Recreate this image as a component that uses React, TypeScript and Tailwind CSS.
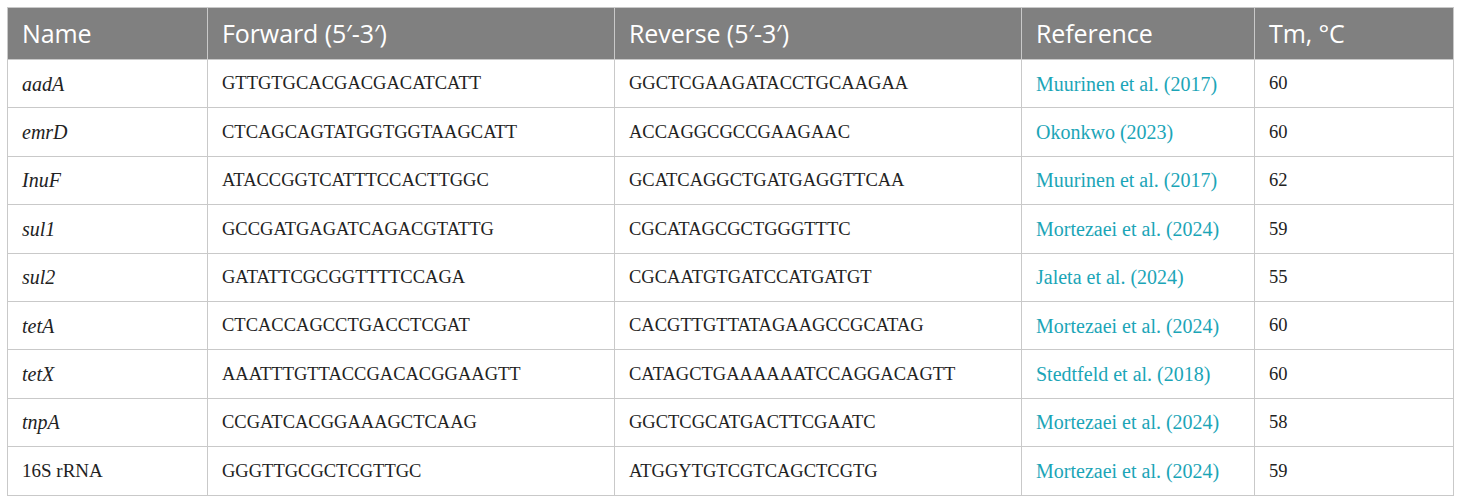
import React from 'react';

type Row = {
  name: string;
  italic: boolean;
  fwd: string;
  rev: string;
  ref: string;
  tm: number;
};

const ROWS: Row[] = [
  { name: 'aadA', italic: true, fwd: 'GTTGTGCACGACGACATCATT', rev: 'GGCTCGAAGATACCTGCAAGAA', ref: 'Muurinen et al. (2017)', tm: 60 },
  { name: 'emrD', italic: true, fwd: 'CTCAGCAGTATGGTGGTAAGCATT', rev: 'ACCAGGCGCCGAAGAAC', ref: 'Okonkwo (2023)', tm: 60 },
  { name: 'InuF', italic: true, fwd: 'ATACCGGTCATTTCCACTTGGC', rev: 'GCATCAGGCTGATGAGGTTCAA', ref: 'Muurinen et al. (2017)', tm: 62 },
  { name: 'sul1', italic: true, fwd: 'GCCGATGAGATCAGACGTATTG', rev: 'CGCATAGCGCTGGGTTTC', ref: 'Mortezaei et al. (2024)', tm: 59 },
  { name: 'sul2', italic: true, fwd: 'GATATTCGCGGTTTTCCAGA', rev: 'CGCAATGTGATCCATGATGT', ref: 'Jaleta et al. (2024)', tm: 55 },
  { name: 'tetA', italic: true, fwd: 'CTCACCAGCCTGACCTCGAT', rev: 'CACGTTGTTATAGAAGCCGCATAG', ref: 'Mortezaei et al. (2024)', tm: 60 },
  { name: 'tetX', italic: true, fwd: 'AAATTTGTTACCGACACGGAAGTT', rev: 'CATAGCTGAAAAAATCCAGGACAGTT', ref: 'Stedtfeld et al. (2018)', tm: 60 },
  { name: 'tnpA', italic: true, fwd: 'CCGATCACGGAAAGCTCAAG', rev: 'GGCTCGCATGACTTCGAATC', ref: 'Mortezaei et al. (2024)', tm: 58 },
  { name: '16S rRNA', italic: false, fwd: 'GGGTTGCGCTCGTTGC', rev: 'ATGGYTGTCGTCAGCTCGTG', ref: 'Mortezaei et al. (2024)', tm: 59 },
];

const th = 'border border-[#c9c9c9] pl-[14px] pr-2 text-left font-normal text-white text-[25px] tracking-[-0.1px]';
const cell = 'border border-[#c9c9c9] pl-[14px] pr-2 text-left leading-none';

export default function App() {
  return (
    <div className="bg-white w-[1460px] h-[502px] pt-[7px] pl-[7px]">
      <table className="border-collapse table-fixed w-[1446px]">
        <colgroup>
          <col className="w-[200px]" />
          <col className="w-[407px]" />
          <col className="w-[407px]" />
          <col className="w-[233px]" />
          <col className="w-[199px]" />
        </colgroup>
        <thead>
          <tr className="h-[52px] bg-[#808080] font-['Open_Sans',sans-serif]">
            <th className={th}>Name</th>
            <th className={th}>Forward (5′-3′)</th>
            <th className={th}>Reverse (5′-3′)</th>
            <th className={th}>Reference</th>
            <th className={th}>Tm, °C</th>
          </tr>
        </thead>
        <tbody className="font-['Liberation_Serif',serif]">
          {ROWS.map(r => (
            <tr key={r.name} className="h-[48.4px]">
              {r.italic ? (
                <td className={`${cell} text-[20px] italic text-[#222]`}>{r.name}</td>
              ) : (
                <td className={`${cell} text-[19px] text-[#222]`}>{r.name}</td>
              )}
              <td className={`${cell} text-[18.5px] text-[#222]`}>{r.fwd}</td>
              <td className={`${cell} text-[18.5px] text-[#222]`}>{r.rev}</td>
              <td className={`${cell} text-[20px] text-[#1ba5b7]`}>{r.ref}</td>
              <td className={`${cell} text-[18.5px] text-[#222]`}>{r.tm}</td>
            </tr>
          ))}
        </tbody>
      </table>
    </div>
  );
}
